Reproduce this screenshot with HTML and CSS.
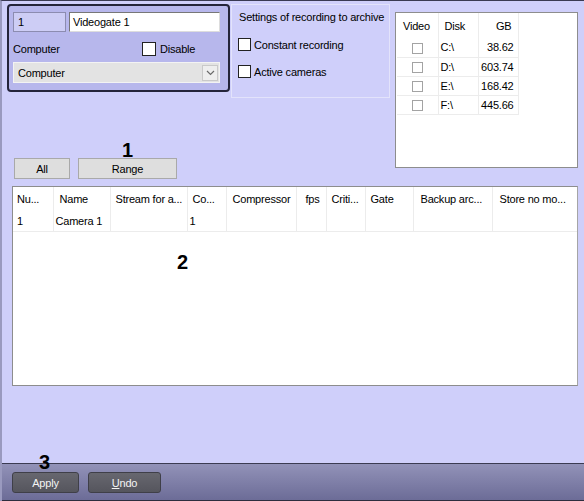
FILE: index.html
```html
<!DOCTYPE html>
<html lang="en">
<head>
    <meta charset="UTF-8">
    <title>Videogate settings</title>
    <link rel="stylesheet" href="styles.css">
</head>
<body>
    <div class="window">
        <div class="content">
            <section class="top">
                <div class="left-col">
                    <div class="top-row">
                        <!-- videogate object -->
                        <div class="camera-panel">
                            <div class="name-row">
                                <div class="field id-field">1</div>
                                <div class="field name-field">Videogate 1</div>
                            </div>
                            <div class="computer-row">
                                <span class="computer-label">Computer</span>
                                <span class="check"></span>
                                <span class="check-text">Disable</span>
                            </div>
                            <div class="select">
                                <span class="select-text">Computer</span>
                                <span class="select-arrow">
                                    <svg width="9" height="6" viewBox="0 0 9 6"><path d="M1 1 L4.5 4.5 L8 1" fill="none" stroke="#6a6a6a" stroke-width="1.2"/></svg>
                                </span>
                            </div>
                        </div>

                        <!-- archive settings -->
                        <div class="archive-group">
                            <p class="group-title">Settings of recording to archive</p>
                            <div class="check-row first">
                                <span class="check"></span>
                                <span class="check-text">Constant recording</span>
                            </div>
                            <div class="check-row">
                                <span class="check"></span>
                                <span class="check-text">Active cameras</span>
                            </div>
                        </div>
                    </div>
                    <div class="mode-buttons">
                        <button class="mode-btn btn-all">All</button>
                        <button class="mode-btn btn-range">Range</button>
                    </div>
                </div>

                <!-- disks -->
                <div class="disk-box">
                    <table class="disk-table">
                        <tr class="head">
                            <td class="c-video">Video</td>
                            <td class="c-disk">Disk</td>
                            <td class="c-gb">GB</td>
                        </tr>
                        <tr><td class="c-video"><span class="small-check"></span></td><td class="c-disk">C:\</td><td class="c-gb">38.62</td></tr>
                        <tr><td class="c-video"><span class="small-check"></span></td><td class="c-disk">D:\</td><td class="c-gb">603.74</td></tr>
                        <tr><td class="c-video"><span class="small-check"></span></td><td class="c-disk">E:\</td><td class="c-gb">168.42</td></tr>
                        <tr><td class="c-video"><span class="small-check"></span></td><td class="c-disk">F:\</td><td class="c-gb">445.66</td></tr>
                    </table>
                </div>
            </section>

            <!-- cameras list -->
            <div class="camera-box">
                <table class="camera-table">
                    <tr class="head">
                        <td class="col-num">Nu...</td>
                        <td class="col-name">Name</td>
                        <td class="col-stream">Stream for a...</td>
                        <td class="col-co">Co...</td>
                        <td class="col-comp">Compressor</td>
                        <td class="col-fps">fps</td>
                        <td class="col-crit">Criti...</td>
                        <td class="col-gate">Gate</td>
                        <td class="col-backup">Backup arc...</td>
                        <td class="col-store">Store no mo...</td>
                    </tr>
                    <tr class="row">
                        <td class="col-num">1</td>
                        <td class="col-name">Camera 1</td>
                        <td class="col-stream"></td>
                        <td class="col-co">1</td>
                        <td class="col-comp"></td>
                        <td class="col-fps"></td>
                        <td class="col-crit"></td>
                        <td class="col-gate"></td>
                        <td class="col-backup"></td>
                        <td class="col-store"></td>
                    </tr>
                </table>
            </div>
        </div>

        <div class="footer">
            <button class="footer-btn btn-apply">Apply</button>
            <button class="footer-btn btn-undo"><u>U</u>ndo</button>
        </div>

        <!-- annotation numbers -->
        <span class="mark mark-1">1</span>
        <span class="mark mark-2">2</span>
        <span class="mark mark-3">3</span>
    </div>
</body>
</html>
```

FILE: styles.css
```css
*{
    margin: 0;
    padding: 0;
    box-sizing: border-box;
}
body{
    font-family: "Liberation Sans", Arial, sans-serif;
    font-size: 11px;
    letter-spacing: -0.2px;
    color: #000;
    background-color: #cfcffa;
}
button{
    font: inherit;
    letter-spacing: inherit;
}
.window{
    position: relative;
    width: 584px;
    height: 501px;
    display: flex;
    flex-direction: column;
    border-top: 1px solid #3a3a52;
    border-left: 2px solid #9a9abf;
}
.content{
    flex: 1;
    padding: 3px 0 0 5px;
    background-color: #cfcffa;
}

/* top part */
.top{
    display: flex;
    align-items: flex-start;
}
.top-row{
    display: flex;
    align-items: flex-start;
}
.camera-panel{
    width: 223px;
    height: 88px;
    border: 2px solid #24243a;
    border-radius: 4px;
    background-color: #b7b7ec;
    padding: 6px 0 0 4px;
}
.name-row{
    display: flex;
    gap: 3px;
}
.field{
    height: 20px;
    line-height: 18px;
    padding-left: 4px;
}
.id-field{
    width: 53px;
    border: 1px solid #8c8cb0;
    background-color: #cdcdf5;
}
.name-field{
    width: 151px;
    border: 1px solid #777;
    border-right-color: #ddd;
    border-bottom-color: #ddd;
    background-color: #fff;
    padding-left: 3px;
}
.computer-row{
    display: flex;
    align-items: center;
    height: 15px;
    margin-top: 9px;
}
.computer-label{
    width: 129px;
}
.check{
    width: 14px;
    height: 14px;
    border: 1px solid #222;
    background-color: #fff;
}
.check-text{
    margin-left: 4px;
}
.select{
    display: flex;
    align-items: center;
    justify-content: space-between;
    width: 207px;
    height: 21px;
    margin-top: 6px;
    background-color: #e3e3e3;
    border: 1px solid #f3f3f3;
    padding: 0 1px 0 4px;
}
.select-arrow{
    display: flex;
    align-items: center;
    justify-content: center;
    width: 16px;
    height: 16px;
    background-color: #eeeeee;
    border: 1px solid #c9c9c9;
}

.archive-group{
    width: 159px;
    height: 94px;
    margin-left: 1px;
    border: 1px solid #e3e3fb;
    padding: 6px 0 0 6px;
}
.group-title{
    margin-left: 1px;
    line-height: 13px;
}
.check-row{
    display: flex;
    align-items: center;
    height: 13px;
    margin-top: 14px;
}
.check-row .check{
    width: 13px;
    height: 13px;
}
.check-row .check-text{
    margin-left: 3px;
}

.mode-buttons{
    display: flex;
    gap: 8px;
    margin: 60px 0 0 7px;
}
.mode-btn{
    height: 21px;
    background-color: #dedede;
    border: 1px solid #a9a9a9;
    color: #000;
    cursor: pointer;
}
.btn-all{
    width: 56px;
}
.btn-range{
    width: 99px;
}

/* disks */
.disk-box{
    width: 183px;
    height: 156px;
    margin: 8px 0 0 5px;
    border: 1px solid #8d8d8d;
    background-color: #fff;
    padding-left: 1px;
}
.disk-table,
.camera-table{
    border-collapse: collapse;
    table-layout: fixed;
}
.disk-table td{
    height: 19px;
    padding: 0;
    border-right: 1px solid #ececec;
    border-bottom: 1px solid #ececec;
    white-space: nowrap;
}
.disk-table .head td{
    height: 25px;
    border-bottom: none;
}
.c-video{
    width: 41px;
    text-align: center;
}
.head .c-video{
    text-align: left;
    padding-left: 6px;
}
.c-disk{
    width: 40px;
    padding-left: 2px !important;
}
.head .c-disk{
    padding-left: 6px !important;
}
.c-gb{
    width: 40px;
    text-align: right;
    padding-right: 4px !important;
}
.head .c-gb{
    padding-right: 6px !important;
}
.small-check{
    display: inline-block;
    width: 11px;
    height: 11px;
    border: 1px solid #a3a3a3;
    vertical-align: middle;
}

/* cameras */
.camera-box{
    width: 566px;
    height: 200px;
    margin: 7px 0 0 5px;
    border: 1px solid #8d8d8d;
    border-right-color: #a5a5a5;
    background-color: #fff;
}
.camera-table{
    width: 564px;
}
.camera-table td{
    padding: 0 0 0 5px;
    border-right: 1px solid #ececec;
    white-space: nowrap;
    overflow: hidden;
}
.camera-table td.col-store{
    border-right: none;
}
.camera-table .head td{
    height: 24px;
}
.camera-table .row td{
    height: 20px;
    padding-left: 2px;
    border-bottom: 1px solid #ececec;
}
.camera-table .head .col-num{ padding-left: 4px; }
.camera-table .row .col-num{ padding-left: 4px; }
.col-num{ width: 40px; }
.col-name{ width: 57px; }
.camera-table .head .col-name{ padding-left: 6px; }
.col-stream{ width: 77px; }
.col-co{ width: 39px; }
.col-comp{ width: 70px; }
.camera-table .head .col-comp{ padding-left: 6px; }
.col-fps{ width: 30px; }
.camera-table .head .col-fps{ padding-left: 9px; }
.col-crit{ width: 39px; }
.col-gate{ width: 48px; }
.col-backup{ width: 79px; }
.camera-table .head .col-backup{ padding-left: 7px; }
.col-store{ width: auto; }
.camera-table .head .col-store{ padding-left: 7px; }

/* bottom bar */
.footer{
    height: 38px;
    display: flex;
    align-items: flex-start;
    gap: 9px;
    padding: 8px 0 0 10px;
    border-top: 1px solid #3b3b52;
    border-bottom: 1px solid #2d2d3e;
    background: linear-gradient(#9292b8, #6c6c97);
}
.footer-btn{
    height: 21px;
    color: #f4f4f4;
    background: linear-gradient(#67676f, #55555d);
    border: 1px solid #3f3f48;
    border-radius: 3px;
    cursor: pointer;
}
.btn-apply{
    width: 67px;
}
.btn-undo{
    width: 73px;
}

.mark{
    position: absolute;
    font-size: 20px;
    line-height: 20px;
    font-weight: bold;
    letter-spacing: 0;
}
.mark-1{
    left: 120px;
    top: 139px;
}
.mark-2{
    left: 175px;
    top: 251px;
}
.mark-3{
    left: 37px;
    top: 451px;
}
```
